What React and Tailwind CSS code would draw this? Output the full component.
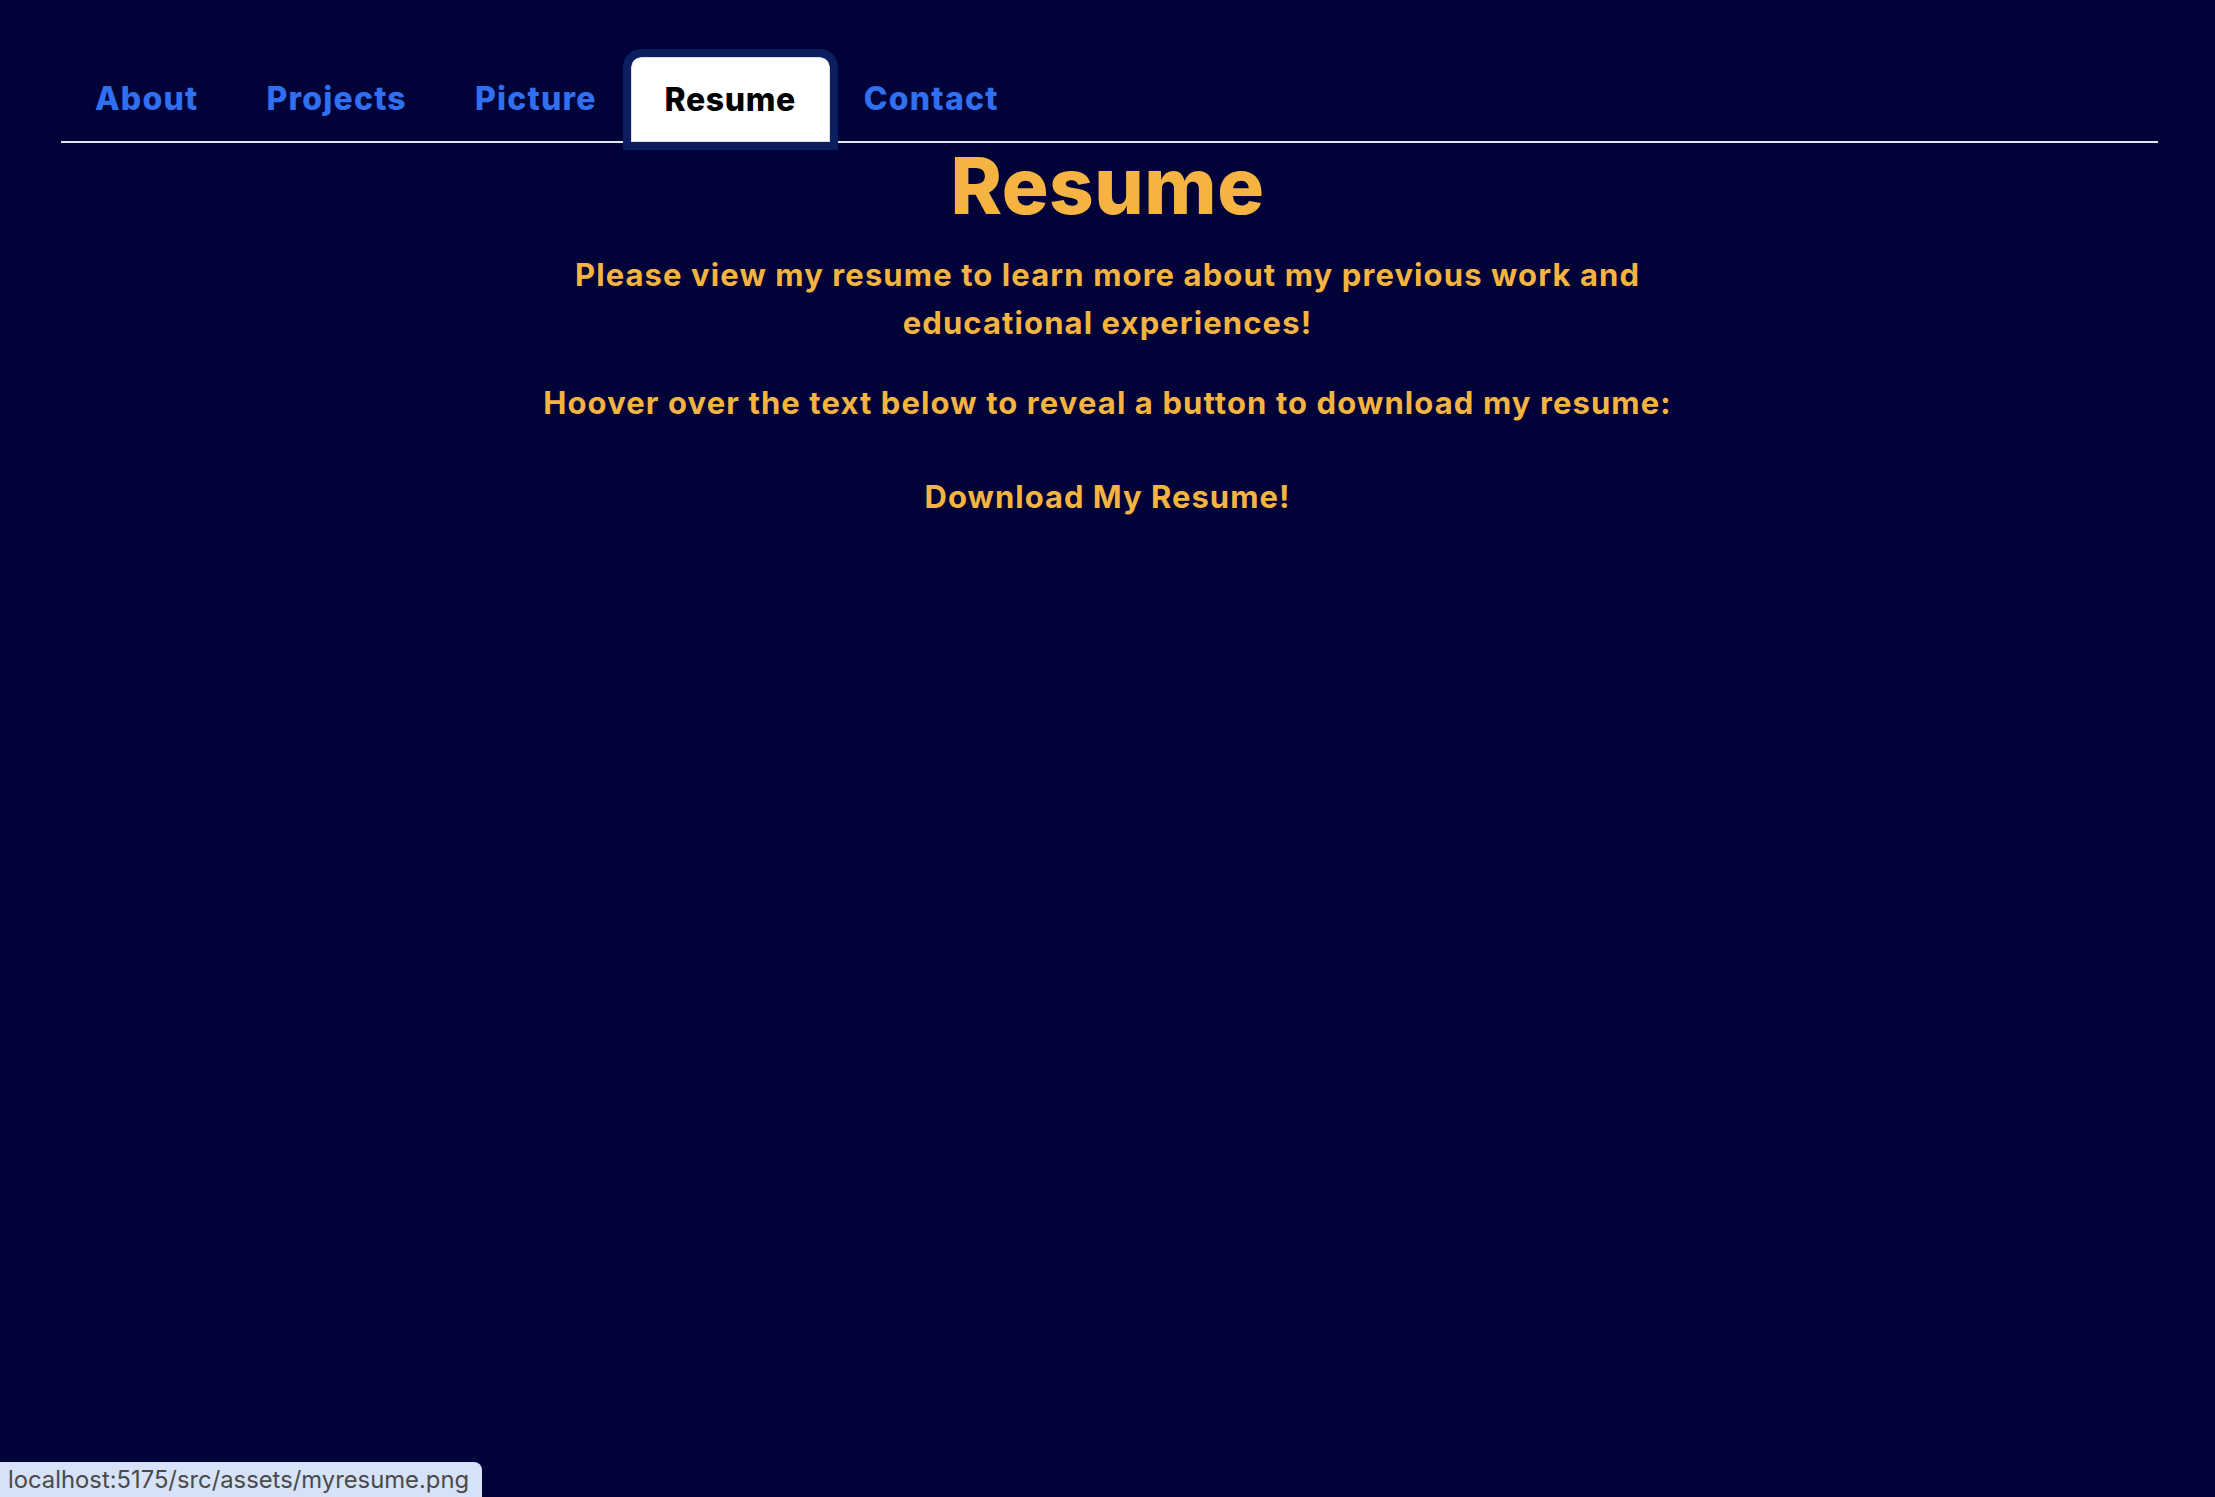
import React from "react";

const tabs = ["About", "Projects", "Picture", "Resume", "Contact"];

export default function App() {
  return (
    <div
      className="relative min-h-[1497px] w-full bg-[#000238] text-[#f5b342]"
      style={{ fontFamily: "Inter, 'Noto Sans', sans-serif" }}
    >
      <nav className="pt-[57px] pl-[61px] pr-[57px]">
        <ul className="flex border-b-2 border-[#e4e4ee]">
          {tabs.map((t) =>
            t === "Resume" ? (
              <li key={t} className="relative z-10 -mb-[2px]">
                <span className="flex h-[85px] items-center rounded-t-[10px] border border-[#dcdce6] bg-white px-[33px] text-[32px] font-extrabold leading-[32px] tracking-[0.6px] text-black outline-[8px] outline-solid outline-[#0b1f60]">
                  {t}
                </span>
              </li>
            ) : (
              <li key={t}>
                <span className="flex h-[84px] items-center px-[34px] text-[32px] font-extrabold leading-[32px] tracking-[1.2px] text-[#2f6ff0]">
                  {t}
                </span>
              </li>
            )
          )}
        </ul>
      </nav>

      <main className="mx-auto flex max-w-[1180px] flex-col items-center text-center">
        <h1 className="mt-[4px] text-[78px] font-extrabold leading-[78px] tracking-[0.5px]">
          Resume
        </h1>
        <p className="mt-[26px] text-[31px] font-bold leading-[48px] tracking-[1.1px]">
          Please view my resume to learn more about my previous work and
          educational experiences!
        </p>
        <p className="mt-[32px] text-[31px] font-bold leading-[48px] tracking-[1.1px]">
          Hoover over the text below to reveal a button to download my resume:
        </p>
        <div className="mt-[46px] text-[31px] font-bold leading-[48px] tracking-[1px]">
          Download My Resume!
        </div>
      </main>

      <div
        className="fixed bottom-0 left-0 flex h-[35px] w-[482px] items-center rounded-tr-[8px] bg-[#d6e2f8] pl-[8px] text-[23.8px] text-[#4a4a4a]"
        style={{ fontFamily: "Inter, 'Liberation Sans', sans-serif" }}
      >
        localhost:5175/src/assets/myresume.png
      </div>
    </div>
  );
}
